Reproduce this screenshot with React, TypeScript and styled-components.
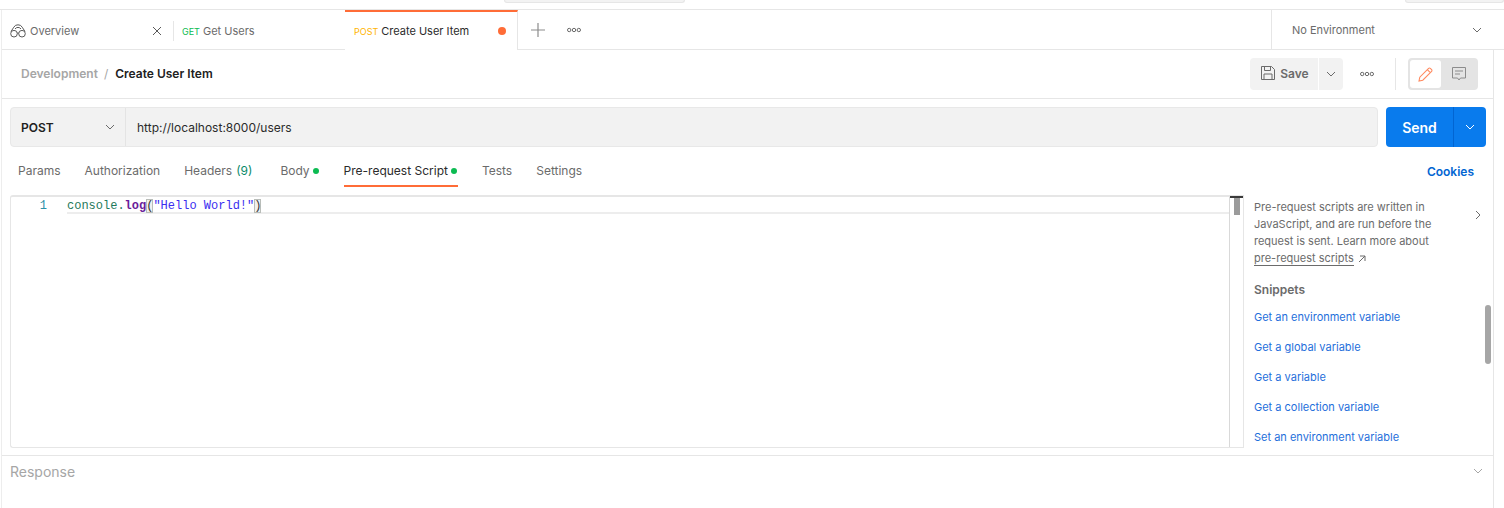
import styled, { createGlobalStyle } from 'styled-components';

const GlobalStyle = createGlobalStyle`
    html, body {
        margin: 0;
        padding: 0;
        background: #fff;
        overflow: hidden;
    }
    * {
        box-sizing: border-box;
    }
    body {
        font-family: Inter, "Liberation Sans", sans-serif;
        font-size: 12px;
        color: #6b6b6b;
    }
`;

const Page = styled.div`
    width: 1504px;
    height: 508px;
    display: flex;
    flex-direction: column;
    overflow: hidden;
`;
const TopStrip = styled.div`
    height: 10px;
    flex: none;
    display: flex;
    justify-content: flex-start;
    border-bottom: 1px solid #e6e6e6;
    padding-left: 504px;
`;
const TopPill = styled.div<{ $w: number; $ml?: number }>`
    width: ${p => p.$w}px;
    height: 3px;
    margin-left: ${p => p.$ml ?? 0}px;
    background: #f3f3f3;
    border: 1px solid #e6e6e6;
    border-top: none;
    border-radius: 0 0 4px 4px;
`;
const Workspace = styled.div`
    flex: 1;
    display: flex;
    flex-direction: column;
    margin-left: 1px;
    width: 1503px;
    border-left: 1px solid #ededed;
    min-height: 0;
`;
const TabBar = styled.div`
    height: 40px;
    flex: none;
    display: flex;
    align-items: stretch;
    border-bottom: 1px solid #e6e6e6;
`;
const Tab = styled.div<{ $w: number; $active?: boolean; $first?: boolean }>`
    width: ${p => p.$w}px;
    display: flex;
    align-items: center;
    gap: ${p => (p.$first ? 4 : 3)}px;
    padding: ${p => (p.$active ? '0 11px 0 9px' : '3px 11px 0 8px')};
    font-size: 11px;
    color: ${p => (p.$active ? '#2b2b2b' : '#6b6b6b')};
    background: #fff;
    ${p => p.$active && `
        border-top: 2px solid #ff6c37;
        border-right: 1px solid #e6e6e6;
        height: 40px;
        margin-bottom: -1px;
    `}
`;
const TabLabel = styled.span`
    flex: 1;
    white-space: nowrap;
`;
const Method = styled.span<{ $color: string }>`
    font-size: 9px;
    color: ${p => p.$color};
`;
const TabDivider = styled.div`
    width: 1px;
    height: 20px;
    background: #e6e6e6;
    align-self: center;
    flex: none;
    margin-top: 2px;
`;
const UnsavedDot = styled.span`
    width: 8px;
    height: 8px;
    border-radius: 50%;
    background: #ff6c37;
    flex: none;
`;
const TabTools = styled.div`
    display: flex;
    align-items: center;
    padding: 1px 0 0 13px;
    gap: 22px;
    flex: 1;
`;
const EnvSelect = styled.div`
    width: 233px;
    flex: none;
    display: flex;
    align-items: center;
    justify-content: space-between;
    padding: 1px 22px 0 20px;
    font-size: 11px;
    color: #6b6b6b;
    border-left: 1px solid #e6e6e6;
`;
const Panel = styled.div`
    width: 1492px;
    flex: 1;
    display: flex;
    flex-direction: column;
    min-height: 0;
    border-right: 1px solid #e6e6e6;
`;
const TitleBar = styled.div`
    height: 49px;
    flex: none;
    display: flex;
    align-items: center;
    padding: 0 15px 0 19px;
    border-bottom: 1px solid #e6e6e6;
`;
const Breadcrumb = styled.div`
    flex: 1;
    display: flex;
    padding-bottom: 2px;
    font-size: 12px;
`;
const Crumb = styled.span`
    font-weight: 600;
    color: #a6a6a6;
`;
const CrumbSep = styled.span`
    color: #a6a6a6;
    margin: 0 7px 0 6px;
`;
const CrumbCurrent = styled.span`
    font-weight: 600;
    color: #212121;
`;
const SaveButton = styled.div`
    width: 68px;
    height: 32px;
    padding: 0 0 2px 2px;
    display: flex;
    align-items: center;
    justify-content: center;
    gap: 5px;
    background: #f2f2f2;
    border-radius: 4px 0 0 4px;
    font-size: 12px;
    font-weight: 600;
    color: #6b6b6b;
`;
const SaveCaret = styled.div`
    width: 24px;
    height: 32px;
    margin-left: 1px;
    display: flex;
    align-items: center;
    justify-content: center;
    background: #f2f2f2;
    border-radius: 0 4px 4px 0;
`;
const TitleMore = styled.div`
    margin-left: 17px;
    width: 14px;
    display: flex;
`;
const TitleDivider = styled.div`
    width: 1px;
    height: 32px;
    background: #e6e6e6;
    margin: 0 12px 0 21px;
`;
const ModeToggle = styled.div`
    width: 70px;
    height: 32px;
    padding: 2px;
    display: flex;
    background: #e4e4e4;
    border-radius: 4px;
`;
const ModeButton = styled.div<{ $on?: boolean }>`
    width: 32px;
    display: flex;
    align-items: center;
    justify-content: center;
    margin-right: 2px;
    background: ${p => (p.$on ? '#fff' : 'transparent')};
    border-radius: 3px;
`;
const RequestRow = styled.div`
    height: 40px;
    flex: none;
    margin: 8px 7px 0 8px;
    display: flex;
    gap: 8px;
`;
const UrlGroup = styled.div`
    flex: 1;
    display: flex;
    background: #f2f2f2;
    border: 1px solid #e8e8e8;
    border-radius: 4px;
`;
const MethodSelect = styled.div`
    width: 115px;
    flex: none;
    display: flex;
    align-items: center;
    justify-content: space-between;
    padding: 0 10px;
    font-size: 12px;
    font-weight: 600;
    color: #212121;
    border-right: 1px solid #e4e4e4;
`;
const UrlText = styled.div`
    padding-left: 11px;
    display: flex;
    align-items: center;
    font-size: 12px;
    color: #2b2b2b;
`;
const SendButton = styled.div`
    width: 100px;
    display: flex;
    background: #097bed;
    border-radius: 4px;
    color: #fff;
`;
const SendLabel = styled.div`
    width: 68px;
    display: flex;
    align-items: center;
    justify-content: center;
    font-size: 14px;
    font-weight: 600;
    border-right: 1px solid #0265d2;
`;
const SendCaret = styled.div`
    flex: 1;
    display: flex;
    align-items: center;
    justify-content: center;
`;
const TabsRow = styled.div`
    height: 44px;
    flex: none;
    margin: 4px 19px 0 16px;
    display: flex;
    align-items: flex-start;
`;
const ReqTab = styled.div<{ $ml: number; $active?: boolean }>`
    margin-left: ${p => p.$ml}px;
    display: flex;
    align-items: center;
    gap: 3px;
    height: 36px;
    padding-top: 5px;
    padding-right: ${p => (p.$active ? 1 : 0)}px;
    font-size: 12px;
    color: ${p => (p.$active ? '#2b2b2b' : '#6b6b6b')};
    border-bottom: 2px solid ${p => (p.$active ? '#ff6c37' : 'transparent')};
`;
const Count = styled.span`
    color: #0a8a6a;
    margin-left: 1px;
`;
const GreenDot = styled.span`
    width: 6px;
    height: 6px;
    border-radius: 50%;
    background: #0cbb52;
`;
const CookiesLink = styled.div`
    margin-left: auto;
    display: flex;
    align-items: center;
    height: 36px;
    padding-top: 5px;
    font-size: 12px;
    font-weight: 600;
    color: #0265d2;
`;
const EditorArea = styled.div`
    height: 253px;
    flex: none;
    margin-left: 8px;
    display: flex;
    overflow: hidden;
`;
const Editor = styled.div`
    width: 1233px;
    flex: none;
    display: flex;
    border: 1px solid #e6e6e6;
    border-top-width: 2px;
    border-right: none;
    border-radius: 3px 0 0 3px;
`;
const Gutter = styled.div`
    width: 56px;
    flex: none;
    padding: 2px 20px 0 0;
    text-align: right;
    font-family: "Liberation Mono", monospace;
    font-size: 12px;
    line-height: 14px;
    color: #2b8fa8;
`;
const Code = styled.div`
    flex: 1;
`;
const CodeLine = styled.div`
    height: 17px;
    padding-top: 2px;
    border-bottom: 2px solid #ededed;
    font-family: "Liberation Mono", monospace;
    font-size: 12px;
    line-height: 14px;
    color: #1f7a5c;
    white-space: pre;
`;
const Keyword = styled.span`
    color: #6a1b9a;
    font-weight: 700;
`;
const Str = styled.span`
    color: #3b2ef0;
`;
const Bracket = styled.span`
    color: #333;
    background: #f0f0f0;
    box-shadow: inset 0 0 0 1px #b9bdb9;
`;
const MiniMap = styled.div`
    width: 14px;
    flex: none;
    border-left: 1px solid #d9d9d9;
    display: flex;
    flex-direction: column;
    align-items: center;
`;
const MiniMapCap = styled.div`
    width: 14px;
    height: 2px;
    margin-top: -1px;
    flex: none;
    background: #3a3a3a;
`;
const MiniMapThumb = styled.div`
    width: 6px;
    height: 17px;
    flex: none;
    background: #9b9b9b;
`;
const SidePanel = styled.div`
    flex: 1;
    border-left: 1px solid #e6e6e6;
    padding: 4px 0 0 10px;
    position: relative;
    overflow: hidden;
`;
const SideScroll = styled.div`
    position: absolute;
    right: 2px;
    top: 110px;
    width: 6px;
    height: 59px;
    border-radius: 3px;
    background: #a6a6a6;
`;
const SideHead = styled.div`
    display: flex;
    justify-content: space-between;
    padding-right: 11px;
`;
const SideText = styled.p`
    margin: 0;
    width: 190px;
    font-size: 11px;
    line-height: 17px;
    color: #6b6b6b;
`;
const SideChevron = styled.div`
    padding-top: 9px;
`;
const DocLink = styled.span`
    display: inline-flex;
    align-items: center;
    gap: 4px;
`;
const DocUnderline = styled.span`
    border-bottom: 1px solid #6b6b6b;
    line-height: 14px;
`;
const SnippetTitle = styled.h3`
    margin: 14px 0 0;
    font-size: 12px;
    line-height: 17px;
    font-weight: 600;
    color: #6b6b6b;
`;
const SnippetList = styled.ul`
    list-style: none;
    margin: 11px 0 0;
    padding: 0;
    display: flex;
    flex-direction: column;
    gap: 13px;
`;
const SnippetItem = styled.li`
    font-size: 11px;
    line-height: 17px;
    color: #1f6fdb;
    white-space: nowrap;
`;
const ResponseBar = styled.div`
    flex: none;
    height: 31px;
    margin-top: 7px;
    border-top: 1px solid #e6e6e6;
    display: flex;
    align-items: center;
    justify-content: space-between;
    padding: 0 10px 0 8px;
    font-size: 14px;
    color: #a6a6a6;
`;

function Chevron({ color = '#6b6b6b', size = 10 }: { color?: string; size?: number }) {
    return (
        <svg width={size} height={size} viewBox="0 0 10 10" fill="none">
            <path d="M1 3l4 4 4-4" stroke={color} strokeWidth="1" />
        </svg>
    );
}

function Dots() {
    return (
        <svg width="14" height="6" viewBox="0 0 14 6" fill="none" stroke="#6b6b6b">
            <circle cx="2.2" cy="3" r="1.7" />
            <circle cx="7" cy="3" r="1.7" />
            <circle cx="11.8" cy="3" r="1.7" />
        </svg>
    );
}

export default function App() {
    return (
        <Page>
            <GlobalStyle />
            <TopStrip>
                <TopPill $w={181} />
                <TopPill $w={99} $ml={720} />
            </TopStrip>
            <Workspace>
                <TabBar>
                    <Tab $w={171} $first>
                        <svg width="16" height="14" viewBox="0 0 16 14" fill="none" stroke="#5a5a5a">
                            <circle cx="4" cy="9.7" r="3.3" />
                            <circle cx="12" cy="9.7" r="3.3" />
                            <path d="M1 7.5L3.8 3.2A4.6 4.6 0 0 1 8 .8a4.6 4.6 0 0 1 4.2 2.4L15 7.5M5 5a3.6 3.6 0 0 1 6 0M7.2 9.2a1.2 1.2 0 0 1 1.6 0" />
                        </svg>
                        <TabLabel>Overview</TabLabel>
                        <svg width="10" height="10" viewBox="0 0 10 10" stroke="#5a5a5a">
                            <path d="M1 1l8 8M9 1L1 9" />
                        </svg>
                    </Tab>
                    <TabDivider />
                    <Tab $w={171}>
                        <Method $color="#0cbb52">GET</Method>
                        <TabLabel>Get Users</TabLabel>
                    </Tab>
                    <Tab $w={173} $active>
                        <Method $color="#ffb400">POST</Method>
                        <TabLabel>Create User Item</TabLabel>
                        <UnsavedDot />
                    </Tab>
                    <TabTools>
                        <svg width="14" height="14" viewBox="0 0 14 14" stroke="#8c8c8c" strokeWidth="1.2">
                            <path d="M7 0v14M0 7h14" />
                        </svg>
                        <Dots />
                    </TabTools>
                    <EnvSelect>
                        No Environment
                        <Chevron />
                    </EnvSelect>
                </TabBar>
                <Panel>
                    <TitleBar>
                        <Breadcrumb>
                            <Crumb>Development</Crumb>
                            <CrumbSep>/</CrumbSep>
                            <CrumbCurrent>Create User Item</CrumbCurrent>
                        </Breadcrumb>
                        <SaveButton>
                            <svg width="14" height="14" viewBox="0 0 14 14" fill="none" stroke="#6b6b6b">
                                <path d="M.5.5h10l3 3v10H.5zM3.5.5v4h6v-4M3 13.5V8h8v5.5" />
                            </svg>
                            Save
                        </SaveButton>
                        <SaveCaret>
                            <Chevron />
                        </SaveCaret>
                        <TitleMore>
                            <Dots />
                        </TitleMore>
                        <TitleDivider />
                        <ModeToggle>
                            <ModeButton $on>
                                <svg width="15" height="15" viewBox="0 0 15 15" fill="none" stroke="#ff8a5f" strokeWidth="1.1">
                                    <path d="M1 14l.8-3.8L10.6 1.4a1.2 1.2 0 0 1 1.7 0l1.3 1.3a1.2 1.2 0 0 1 0 1.7L4.8 13.2zM9.3 2.7l3 3" />
                                </svg>
                            </ModeButton>
                            <ModeButton>
                                <svg width="14" height="14" viewBox="0 0 14 14" fill="none" stroke="#8c8c8c">
                                    <path d="M.5.5h13v10.5H8.5L7 13 5.5 11H.5zM3 4h8M3 7h5" />
                                </svg>
                            </ModeButton>
                        </ModeToggle>
                    </TitleBar>
                    <RequestRow>
                        <UrlGroup>
                            <MethodSelect>
                                POST
                                <Chevron />
                            </MethodSelect>
                            <UrlText>http://localhost:8000/users</UrlText>
                        </UrlGroup>
                        <SendButton>
                            <SendLabel>Send</SendLabel>
                            <SendCaret>
                                <Chevron color="#fff" />
                            </SendCaret>
                        </SendButton>
                    </RequestRow>
                    <TabsRow>
                        <ReqTab $ml={0}>Params</ReqTab>
                        <ReqTab $ml={24}>Authorization</ReqTab>
                        <ReqTab $ml={24}>Headers <Count>(9)</Count></ReqTab>
                        <ReqTab $ml={28}>Body<GreenDot /></ReqTab>
                        <ReqTab $ml={25} $active>Pre-request Script<GreenDot /></ReqTab>
                        <ReqTab $ml={24}>Tests</ReqTab>
                        <ReqTab $ml={24}>Settings</ReqTab>
                        <CookiesLink>Cookies</CookiesLink>
                    </TabsRow>
                    <EditorArea>
                        <Editor>
                            <Gutter>1</Gutter>
                            <Code>
                                <CodeLine>
                                    console.<Keyword>log</Keyword><Bracket>(</Bracket><Str>"Hello World!"</Str><Bracket>)</Bracket>
                                </CodeLine>
                            </Code>
                            <MiniMap>
                                <MiniMapCap />
                                <MiniMapThumb />
                            </MiniMap>
                        </Editor>
                        <SidePanel>
                            <SideScroll />
                            <SideHead>
                                <SideText>
                                    Pre-request scripts are written in JavaScript, and are run before the request is sent. Learn more about{' '}
                                    <DocLink>
                                        <DocUnderline>pre-request scripts</DocUnderline>
                                        <svg width="8" height="8" viewBox="0 0 8 8" fill="none" stroke="#6b6b6b">
                                            <path d="M1 7l6-6M2 1h5v5" />
                                        </svg>
                                    </DocLink>
                                </SideText>
                                <SideChevron>
                                    <svg width="8" height="10" viewBox="0 0 8 10" fill="none" stroke="#6b6b6b">
                                        <path d="M2 1l4 4-4 4" />
                                    </svg>
                                </SideChevron>
                            </SideHead>
                            <SnippetTitle>Snippets</SnippetTitle>
                            <SnippetList>
                                <SnippetItem>Get an environment variable</SnippetItem>
                                <SnippetItem>Get a global variable</SnippetItem>
                                <SnippetItem>Get a variable</SnippetItem>
                                <SnippetItem>Get a collection variable</SnippetItem>
                                <SnippetItem>Set an environment variable</SnippetItem>
                            </SnippetList>
                        </SidePanel>
                    </EditorArea>
                    <ResponseBar>
                        Response
                        <Chevron color="#a6a6a6" />
                    </ResponseBar>
                </Panel>
            </Workspace>
        </Page>
    );
}
